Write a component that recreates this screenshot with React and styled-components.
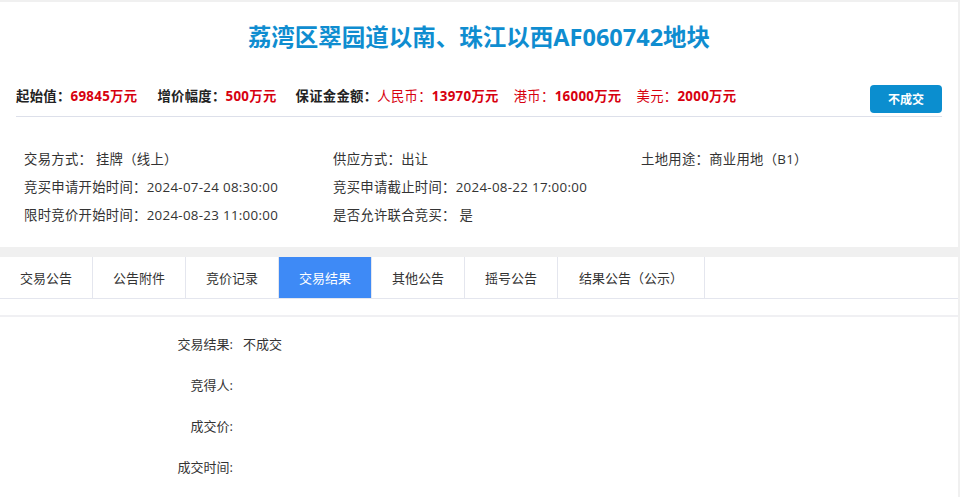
import React from 'react';
import styled, { createGlobalStyle } from 'styled-components';

const GlobalStyle = createGlobalStyle`
    body {
        margin: 0;
        background: #f0f0f0;
        font-family: "Open Sans", "Noto Sans CJK SC", sans-serif;
        color: #333;
    }
`;

const Page = styled.div`
    padding: 2px 2px 0 0;
`;

const Panel = styled.div`
    background: #fff;
    margin-top: ${(props) => props.gap || 0}px;
    padding-bottom: ${(props) => props.bottom || 0}px;
`;

const Title = styled.h1`
    margin: 0;
    padding-top: 19px;
    font-size: 23.5px;
    line-height: 32px;
    font-weight: 700;
    color: #0f8dd0;
    text-align: center;
`;

const PriceBar = styled.div`
    display: flex;
    justify-content: space-between;
    align-items: flex-start;
    margin: 32px 16px 0;
    padding-bottom: 3px;
    border-bottom: 1px solid #dde0ea;
`;

const PriceList = styled.div`
    display: flex;
    margin-top: 1px;
    font-size: 13.33px;
    letter-spacing: 0.3px;
    line-height: 20px;
    font-weight: 700;
    color: #222;
`;

const PriceItem = styled.span`
    margin-right: ${(props) => props.space}px;
    white-space: nowrap;
`;

const Red = styled.span`
    color: #d7000f;
    font-weight: ${(props) => (props.light ? 400 : 700)};
`;

const StatusButton = styled.button`
    width: 72px;
    height: 28px;
    border: none;
    border-radius: 4px;
    background: #0b8ecf;
    color: #fff;
    font-family: inherit;
    font-size: 12px;
    font-weight: 700;
`;

const InfoGrid = styled.div`
    display: grid;
    grid-template-columns: 309px 308px 1fr;
    padding: 28px 24px 18px;
    font-size: 13.33px;
    letter-spacing: 0.3px;
    line-height: 28px;
    color: #333;
`;

const TabBar = styled.div`
    display: flex;
    height: 41px;
    border-bottom: 1px solid #e4e6ee;
`;

const Tab = styled.div`
    display: flex;
    align-items: center;
    justify-content: center;
    width: ${(props) => props.width}px;
    border-right: 1px solid #e4e6ee;
    box-sizing: border-box;
    font-size: 13px;
    color: ${(props) => (props.active ? '#fff' : '#333')};
    background: ${(props) => (props.active ? '#3e8af6' : '#fff')};
`;

const ResultArea = styled.div`
    margin-top: 16px;
    border-top: 2px solid #f0f0f3;
    padding-top: 7px;
    display: grid;
    grid-template-columns: 233px 1fr;
    column-gap: 10px;
    font-size: 13px;
    line-height: 41px;
    color: #333;
`;

const ResultLabel = styled.div`
    text-align: right;
`;

const ResultValue = styled.div`
    min-height: 41px;
`;

const tabs = [
    { name: '交易公告', width: 93 },
    { name: '公告附件', width: 93 },
    { name: '竞价记录', width: 93 },
    { name: '交易结果', width: 93, active: true },
    { name: '其他公告', width: 93 },
    { name: '摇号公告', width: 93 },
    { name: '结果公告（公示）', width: 147 },
];

const info = [
    '交易方式： 挂牌（线上）',
    '供应方式：出让',
    '土地用途：商业用地（B1）',
    '竞买申请开始时间：2024-07-24 08:30:00',
    '竞买申请截止时间：2024-08-22 17:00:00',
    '',
    '限时竞价开始时间：2024-08-23 11:00:00',
    '是否允许联合竞买： 是',
    '',
];

const results = [
    ['交易结果:', '不成交'],
    ['竞得人:', ''],
    ['成交价:', ''],
    ['成交时间:', ''],
];

const App = () => (
    <Page>
        <GlobalStyle />
        <Panel>
            <Title>荔湾区翠园道以南、珠江以西AF060742地块</Title>
            <PriceBar>
                <PriceList>
                    <PriceItem space={20}>起始值：<Red>69845万元</Red></PriceItem>
                    <PriceItem space={19}>增价幅度：<Red>500万元</Red></PriceItem>
                    <PriceItem space={15}>
                        保证金金额：<Red light>人民币：</Red><Red>13970万元</Red>
                    </PriceItem>
                    <PriceItem space={15}><Red light>港币：</Red><Red>16000万元</Red></PriceItem>
                    <PriceItem space={0}><Red light>美元：</Red><Red>2000万元</Red></PriceItem>
                </PriceList>
                <StatusButton>不成交</StatusButton>
            </PriceBar>
            <InfoGrid>
                {info.map((text, i) => (
                    <div key={i}>{text}</div>
                ))}
            </InfoGrid>
        </Panel>
        <Panel gap={10} bottom={20}>
            <TabBar>
                {tabs.map((tab) => (
                    <Tab key={tab.name} width={tab.width} active={tab.active}>
                        {tab.name}
                    </Tab>
                ))}
            </TabBar>
            <ResultArea>
                {results.map(([label, value]) => (
                    <React.Fragment key={label}>
                        <ResultLabel>{label}</ResultLabel>
                        <ResultValue>{value}</ResultValue>
                    </React.Fragment>
                ))}
            </ResultArea>
        </Panel>
    </Page>
);

export default App;
